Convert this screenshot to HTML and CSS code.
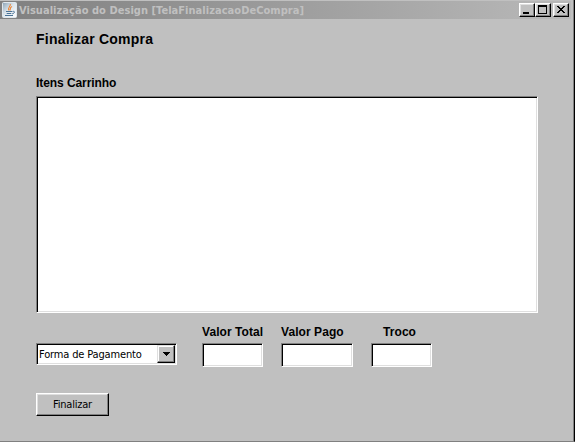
FILE: index.html
```html
<!DOCTYPE html>
<html lang="pt-BR">
<head>
<meta charset="utf-8">
<title>Finalizar Compra</title>
<link rel="stylesheet" href="styles.css">
</head>
<body>
<div class="window">
  <header class="titlebar">
    <svg class="java" width="15" height="16" viewBox="0 0 15 16">
      <defs><linearGradient id="tile" x1="0" y1="0" x2="1" y2="1"><stop offset="0" stop-color="#8aa2b5"/><stop offset=".45" stop-color="#dce5ec"/><stop offset="1" stop-color="#fff"/></linearGradient></defs>
      <rect x=".5" y=".5" width="14" height="15" rx="1" fill="url(#tile)" stroke="#e1e8ed"/>
      <path d="M8.300 2C9 4.500 5 5.500 7 8.500M10 4.500C7.500 5.500 8.500 7 8 8.500" fill="none" stroke="#ee8432" stroke-width="1.100"/>
      <path d="M4 9.500h6M4.700 11.500h4.600M3 13.500h8M10.500 9.500c3-.8 2.300 2-.3 2.300" fill="none" stroke="#4a7397" stroke-width="1"/>
    </svg>
    <h1 class="caption">Visualização do Design [TelaFinalizacaoDeCompra]</h1>
    <div class="controls">
      <button class="control" aria-label="Minimizar"><svg width="12" height="10" viewBox="0 0 12 10" shape-rendering="crispEdges"><path d="M2 7h6v2H2z"/></svg></button>
      <button class="control" aria-label="Maximizar"><svg width="12" height="10" viewBox="0 0 12 10" shape-rendering="crispEdges"><path fill-rule="evenodd" d="M1 0h9v9H1zM2 2v6h7V2z"/></svg></button>
      <button class="control close" aria-label="Fechar"><svg width="12" height="10" viewBox="0 0 12 10" shape-rendering="crispEdges"><path d="M2 1h2v1h1v1h2V2h1V1h2v1H9v1H8v1H7v1h1v1h1v1h1v1H8V7H7V6H5v1H4v1H2V7h1V6h1V5h1V4H4V3H3V2H2z"/></svg></button>
    </div>
  </header>
  <main class="content">
    <h2 class="heading">Finalizar Compra</h2>
    <h3 class="label list-label">Itens Carrinho</h3>
    <div class="sunken list"></div>
    <div class="payment">
      <div class="sunken combo"><span class="combo-text">Forma de Pagamento</span><button class="arrow" aria-label="Abrir"><svg width="7" height="4" viewBox="0 0 7 4" shape-rendering="crispEdges"><path d="M0 0h7v1H6v1H5v1H4v1H3V3H2V2H1V1H0z"/></svg></button></div>
      <div class="field total"><span class="label">Valor Total</span><div class="sunken input"></div></div>
      <div class="field paid"><span class="label">Valor Pago</span><div class="sunken input"></div></div>
      <div class="field change"><span class="label">Troco</span><div class="sunken input"></div></div>
    </div>
    <button class="submit"><span class="submit-text">Finalizar</span></button>
  </main>
</div>
</body>
</html>
```
FILE: styles.css
```css
* { box-sizing: border-box; }
body { margin: 0; background: #c0c0c0; overflow: hidden; }
h1, h2, h3 { margin: 0; }
button { padding: 0; margin: 0; color: #000; border-radius: 0; }
svg { display: block; }

.window {
  width: 575px;
  height: 442px;
  padding-top: 1px;
  background: #c0c0c0;
  border-right: 1px solid #000;
  border-bottom: 1px solid #808080;
  box-shadow: inset -1px 0 #808080;
}
.titlebar {
  display: flex;
  align-items: center;
  width: 571px;
  height: 18px;
  padding-left: 2px;
  background: linear-gradient(90deg, #808080, #b9b9b9);
}
.java { flex: none; margin-right: 2px; }
.caption {
  flex: 1;
  padding-top: 1px;
  font: bold 11px/16px "DejaVu Sans Condensed", "DejaVu Sans", sans-serif;
  font-stretch: condensed;
  letter-spacing: 0.04px;
  color: #c0c0c0;
  white-space: nowrap;
}
.controls { display: flex; margin-right: 2px; }
.control {
  width: 16px;
  height: 14px;
  background: #c0c0c0;
  border: 1px solid;
  border-color: #fff #000 #000 #fff;
  box-shadow: inset -1px -1px #808080, inset 1px 1px #dfdfdf;
}
.control svg { margin: 1px; }
.close { margin-left: 2px; }

.content { padding: 12px 36px 0; }
.heading { font: bold 14px/16px "Liberation Sans", Arial, sans-serif; letter-spacing: 0.23px; }
.label { font: bold 12px/14px "Liberation Sans", Arial, sans-serif; white-space: nowrap; }
.list-label { margin-top: 29px; letter-spacing: -0.07px; }
.sunken {
  background: #fff;
  border: 1px solid;
  border-color: #808080 #fff #fff #808080;
  box-shadow: inset 1px 1px #000, inset -1px -1px #dfdfdf;
}
.list { width: 502px; height: 217px; margin-top: 6px; }
.payment { display: flex; height: 42px; margin-top: 12px; }
.combo {
  display: flex;
  align-items: center;
  width: 141px;
  height: 22px;
  margin: 18px 25px 0 0;
  padding: 1px;
}
.combo-text {
  flex: 1;
  padding: 2px 0 0 1px;
  font: 11px/14px "DejaVu Sans Condensed", "DejaVu Sans", sans-serif;
  font-stretch: condensed;
  letter-spacing: -0.15px;
  white-space: nowrap;
}
.arrow {
  display: grid;
  place-items: center;
  width: 18px;
  height: 18px;
  background: #c0c0c0;
  border: 1px solid;
  border-color: #dfdfdf #000 #000 #dfdfdf;
  box-shadow: inset -1px -1px #808080, inset 1px 1px #fff;
}
.field { display: flex; flex-direction: column; }
.field .label { letter-spacing: 0.07px; }
.input { height: 24px; margin-top: 4px; }
.total { width: 61px; margin-right: 18px; }
.paid { width: 72px; margin-right: 18px; }
.change { width: 61px; }
.change .label { padding-left: 12px; }
.submit {
  display: block;
  width: 73px;
  height: 23px;
  margin-top: 26px;
  background: #c0c0c0;
  border: 1px solid;
  border-color: #fff #000 #000 #fff;
  box-shadow: inset -1px -1px #808080, inset 1px 1px #dfdfdf;
  font: 11px/14px "DejaVu Sans Condensed", "DejaVu Sans", sans-serif;
  font-stretch: condensed;
  letter-spacing: -0.2px;
}
```
